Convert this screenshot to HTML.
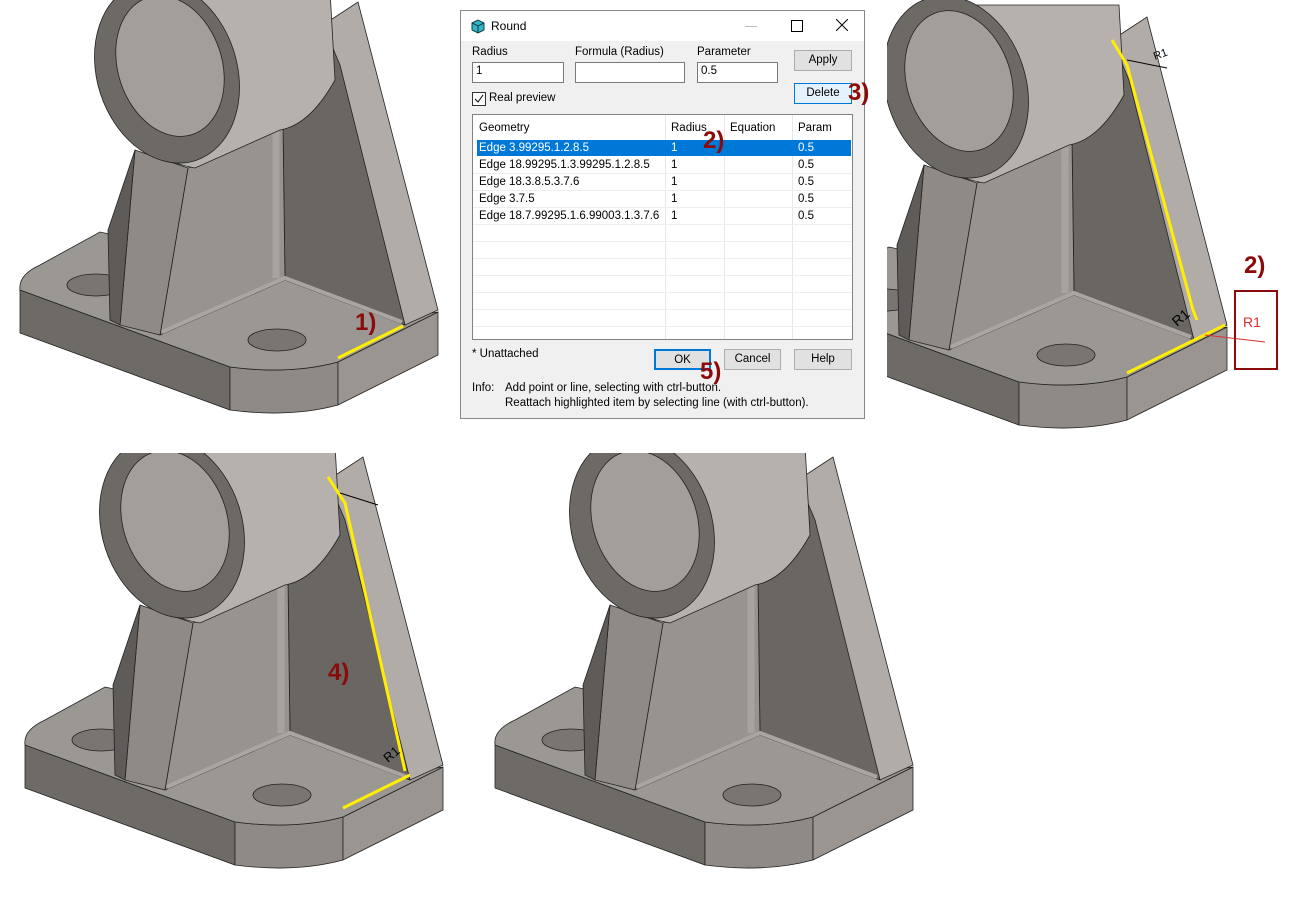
<!DOCTYPE html>
<html><head><meta charset="utf-8"><style>
body{margin:0;width:1290px;height:900px;background:#fff;position:relative;overflow:hidden;font-family:"Liberation Sans",sans-serif;}
.dlg{position:absolute;left:460px;top:10px;width:405px;height:409px;background:#f0f0f0;border:1px solid #888;box-sizing:border-box;font-size:11.5px;color:#000}
.tb{position:absolute;left:0;top:0;right:0;height:30px;background:#fff}
.a{position:absolute;white-space:nowrap}
.in{position:absolute;background:#fff;border:1px solid #7a7a7a;height:21px;box-sizing:border-box;padding:2px 3px}
.bt{position:absolute;background:#e1e1e1;border:1px solid #adadad;box-sizing:border-box;text-align:center;line-height:18px}
.tbl{position:absolute;left:11px;top:103px;width:381px;height:226px;background:#fff;border:1px solid #828282;box-sizing:border-box}
.ann{position:absolute;color:#8b0a0a;font-weight:bold;font-size:24px;font-family:"Liberation Sans",sans-serif}
</style></head><body>
<svg width="1290" height="900" style="position:absolute;left:0;top:0">
<defs>
<g id="part">
<path d="M20,290 L20,333 L230,410 L230,367 Z" fill="#6e6a66" stroke="#222" stroke-width="0.8"/>
<path d="M230,367 Q290,375 338,362 L338,405 Q290,418 230,410 Z" fill="#8f8a86" stroke="#222" stroke-width="0.8"/>
<path d="M338,362 L438,312 L438,355 L338,405 Z" fill="#9a9591" stroke="#222" stroke-width="0.8"/>
<path d="M20,290 Q18,275 40,265 L100,232 L160,245 L285,272 L400,318 L438,312 L338,362 Q290,375 230,367 Z" fill="#9b9793" stroke="#222" stroke-width="0.8"/>
<ellipse cx="96" cy="285" rx="29" ry="11" fill="#7a7571" stroke="#222" stroke-width="0.8"/>
<ellipse cx="277" cy="340" rx="29" ry="11" fill="#7a7571" stroke="#222" stroke-width="0.8"/>
<path d="M323,25 L358,2 L438,310 L405,325 Z" fill="#b1aca8" stroke="#222" stroke-width="0.8"/>
<path d="M323,25 L340,65 L405,325 L285,280 L283,125 Z" fill="#6a6662" stroke="#222" stroke-width="0.8"/>
<path d="M188,168 L283,125 L285,280 L160,335 Z" fill="#98938f" stroke="#222" stroke-width="0.8"/>
<path d="M162,332 L285,278 L402,322" fill="none" stroke="#aaa5a1" stroke-width="4"/>
<path d="M276,130 L276,278" stroke="#a8a39f" stroke-width="7"/>
<path d="M135,150 L188,168 L160,335 L120,325 Z" fill="#8f8a86" stroke="#222" stroke-width="0.8"/>
<path d="M135,150 L120,325 L110,320 L108,230 Z" fill="#5f5b58" stroke="#222" stroke-width="0.8"/>
<path d="M175,-10 L330,-10 L335,80 Q310,125 280,130 L195,168 Q150,160 140,130 Z" fill="#b6b1ad" stroke="#222" stroke-width="0.8"/>
<ellipse cx="167" cy="72" rx="70" ry="93" transform="rotate(-18 167 72)" fill="#6d6965" stroke="#222" stroke-width="0.8"/>
<ellipse cx="170" cy="66" rx="52" ry="72" transform="rotate(-18 170 66)" fill="#a39e9a" stroke="#222" stroke-width="0.8"/>
</g>
</defs>
<use href="#part"/>
<line x1="338" y1="358" x2="403" y2="326" stroke="#ffee00" stroke-width="3"/>
<svg x="887" y="0" width="403" height="440"><use href="#part" transform="translate(-98,15)"/>
<path d="M225,40 L240,65 L306,310 L310,320" fill="none" stroke="#ffee00" stroke-width="3"/>
<line x1="240" y1="373" x2="338" y2="325" stroke="#ffee00" stroke-width="3"/>
<line x1="240" y1="60" x2="280" y2="68" stroke="#000" stroke-width="1"/>
<text x="268" y="60" font-size="11" transform="rotate(-20 268 60)" font-family="Liberation Sans">R1</text>
<text x="290" y="327" font-size="14" transform="rotate(-40 290 327)" font-family="Liberation Sans">R1</text>
<line x1="318" y1="335" x2="378" y2="342" stroke="#e03030" stroke-width="1"/>
</svg>
<svg x="0" y="453" width="460" height="447"><use href="#part" transform="translate(5,2)"/>
<path d="M328,24 L345,50 L405,318" fill="none" stroke="#ffee00" stroke-width="3"/>
<line x1="343" y1="355" x2="410" y2="322" stroke="#ffee00" stroke-width="3"/>
<line x1="340" y1="40" x2="378" y2="52" stroke="#000" stroke-width="1"/>
<text x="388" y="310" font-size="13" transform="rotate(-40 388 310)" font-family="Liberation Sans">R1</text>
</svg>
<svg x="480" y="453" width="440" height="447"><use href="#part" transform="translate(-5,2)"/></svg>
</svg>
<div class="ann" style="left:355px;top:309px">1)</div>
<div class="ann" style="left:1244px;top:252px">2)</div>
<div class="ann" style="left:328px;top:659px">4)</div>
<div style="position:absolute;left:1234px;top:290px;width:40px;height:76px;border:2px solid #8b0a0a"></div>
<div class="a" style="left:1243px;top:314px;color:#e03030;font-size:14px">R1</div>

<div class="dlg">
<div class="tb">
<svg class="a" style="left:9px;top:7px" width="16" height="16"><path d="M2,5 L8,2 L14,5 L14,12 L8,15 L2,12 Z" fill="#33b5c8" stroke="#0d3c45"/><path d="M2,5 L8,8 L14,5 M8,8 L8,15" stroke="#0d3c45" fill="none"/></svg>
<div class="a" style="left:30px;top:8px;font-size:12px">Round</div>
<div class="a" style="left:284px;top:15px;width:12px;border-top:1px solid #bbb"></div>
<div class="a" style="left:330px;top:9px;width:10px;height:10px;border:1px solid #000"></div>
<svg class="a" style="left:375px;top:8px" width="12" height="12"><path d="M0,0 L12,12 M12,0 L0,12" stroke="#000"/></svg>
</div>
<div class="a" style="left:11px;top:35px">Radius</div>
<div class="a" style="left:114px;top:35px">Formula (Radius)</div>
<div class="a" style="left:236px;top:35px">Parameter</div>
<div class="in" style="left:11px;top:51px;width:92px">1</div>
<div class="in" style="left:114px;top:51px;width:110px"></div>
<div class="in" style="left:236px;top:51px;width:81px">0.5</div>
<div class="bt" style="left:333px;top:39px;width:58px;height:21px">Apply</div>
<div class="bt" style="left:333px;top:72px;width:58px;height:21px;background:#e5f1fb;border-color:#0078d7">Delete</div>
<div class="a" style="left:11px;top:81px;width:12px;height:12px;border:1px solid #333;background:#fff"><svg width="12" height="12" style="position:absolute;left:0;top:0"><path d="M2,6 L5,9 L10,2" stroke="#000" fill="none"/></svg></div>
<div class="a" style="left:28px;top:81px">Real preview</div>
<div class="tbl">
<div class="a" style="left:6px;top:7px">Geometry</div><div class="a" style="left:198px;top:7px">Radius</div><div class="a" style="left:257px;top:7px">Equation</div><div class="a" style="left:325px;top:7px">Param</div>
<div class="a" style="left:192px;top:0;height:224px;border-left:1px solid #e8e8e8"></div>
<div class="a" style="left:251px;top:0;height:224px;border-left:1px solid #e8e8e8"></div>
<div class="a" style="left:319px;top:0;height:224px;border-left:1px solid #e8e8e8"></div>
<div class="a" style="left:4px;top:25px;width:374px;height:16px;background:#0078d7"></div>
<div class="a" style="left:6px;top:27px;color:#fff">Edge 3.99295.1.2.8.5</div><div class="a" style="left:198px;top:27px;color:#fff">1</div><div class="a" style="left:325px;top:27px;color:#fff">0.5</div>
<div class="a" style="left:6px;top:44px">Edge 18.99295.1.3.99295.1.2.8.5</div><div class="a" style="left:198px;top:44px">1</div><div class="a" style="left:325px;top:44px">0.5</div>
<div class="a" style="left:6px;top:61px">Edge 18.3.8.5.3.7.6</div><div class="a" style="left:198px;top:61px">1</div><div class="a" style="left:325px;top:61px">0.5</div>
<div class="a" style="left:6px;top:78px">Edge 3.7.5</div><div class="a" style="left:198px;top:78px">1</div><div class="a" style="left:325px;top:78px">0.5</div>
<div class="a" style="left:6px;top:95px">Edge 18.7.99295.1.6.99003.1.3.7.6</div><div class="a" style="left:198px;top:95px">1</div><div class="a" style="left:325px;top:95px">0.5</div>
<div class="a" style="left:0;top:58px;width:379px;height:0;border-top:1px solid #eee"></div>
<div class="a" style="left:0;top:75px;width:379px;border-top:1px solid #eee"></div>
<div class="a" style="left:0;top:92px;width:379px;border-top:1px solid #eee"></div>
<div class="a" style="left:0;top:109px;width:379px;border-top:1px solid #eee"></div>
<div class="a" style="left:0;top:126px;width:379px;border-top:1px solid #eee"></div>
<div class="a" style="left:0;top:143px;width:379px;border-top:1px solid #eee"></div>
<div class="a" style="left:0;top:160px;width:379px;border-top:1px solid #eee"></div>
<div class="a" style="left:0;top:177px;width:379px;border-top:1px solid #eee"></div>
<div class="a" style="left:0;top:194px;width:379px;border-top:1px solid #eee"></div>
<div class="a" style="left:0;top:211px;width:379px;border-top:1px solid #eee"></div>
</div>
<div class="a" style="left:11px;top:337px">* Unattached</div>
<div class="bt" style="left:193px;top:338px;width:57px;height:21px;border:2px solid #0078d7">OK</div>
<div class="bt" style="left:263px;top:338px;width:57px;height:21px">Cancel</div>
<div class="bt" style="left:333px;top:338px;width:58px;height:21px">Help</div>
<div class="a" style="left:11px;top:371px">Info:</div>
<div class="a" style="left:44px;top:371px">Add point or line, selecting with ctrl-button.</div>
<div class="a" style="left:44px;top:386px">Reattach highlighted item by selecting line (with ctrl-button).</div>
</div>
<div class="ann" style="left:703px;top:127px">2)</div>
<div class="ann" style="left:848px;top:79px">3)</div>
<div class="ann" style="left:700px;top:358px">5)</div>
</body></html>
